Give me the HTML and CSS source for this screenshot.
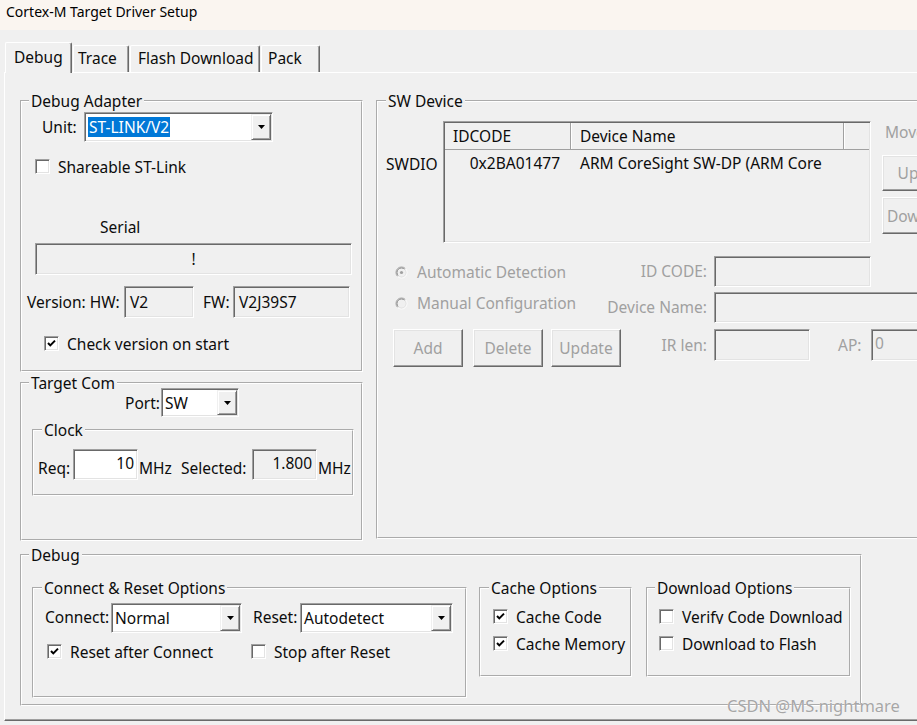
FILE: index.html
```html
<!DOCTYPE html>
<html>
<head>
<meta charset="utf-8">
<title>Cortex-M Target Driver Setup</title>
<link rel="stylesheet" href="styles.css">
</head>
<body>
<div class="title">Cortex-M Target Driver Setup</div>
<div class="tabs">
  <div class="tab tab-debug active">Debug</div>
  <div class="tab tab-trace">Trace</div>
  <div class="tab tab-flash">Flash Download</div>
  <div class="tab tab-pack">Pack</div>
</div>
<div class="panel">
  <div class="top">
    <div class="leftcol">
      <fieldset class="g adapter">
        <legend>Debug Adapter</legend>
        <div class="unit-row">
          <span class="unit-lbl">Unit:</span>
          <div class="select unit-sel">
            <span class="val"><span class="hl">ST-LINK/V2</span></span>
            <span class="dd"><svg width="7" height="4" viewBox="0 0 7 4"><path d="M0 0H7L3.5 4Z" fill="#000"/></svg></span>
          </div>
        </div>
        <div class="chk share"><span class="cb"></span><span>Shareable ST-Link</span></div>
        <div class="serial-lbl">Serial</div>
        <div class="box dis serial">!</div>
        <div class="ver-row">
          <span class="ver-lbl">Version: HW:</span>
          <div class="box dis hw">V2</div>
          <span class="fw-lbl">FW:</span>
          <div class="box dis fw">V2J39S7</div>
        </div>
        <div class="chk checkver"><span class="cb"><svg width="11" height="11" viewBox="0 0 11 11"><path d="M2 5L4.3 7.4L9 2.6" fill="none" stroke="#000" stroke-width="2"/></svg></span><span>Check version on start</span></div>
      </fieldset>
      <fieldset class="g tcom">
        <legend>Target Com</legend>
        <div class="port-row">
          <span class="port-lbl">Port:</span>
          <div class="select port-sel">
            <span class="val">SW</span>
            <span class="dd"><svg width="7" height="4" viewBox="0 0 7 4"><path d="M0 0H7L3.5 4Z" fill="#000"/></svg></span>
          </div>
        </div>
        <fieldset class="g clock">
          <legend>Clock</legend>
          <div class="clk-row">
            <span class="req-lbl">Req:</span>
            <div class="box req">10</div>
            <span class="mhz">MHz</span>
            <span class="sel-lbl">Selected:</span>
            <div class="box dis selbox">1.800</div>
            <span class="mhz2">MHz</span>
          </div>
        </fieldset>
      </fieldset>
    </div>
    <fieldset class="g swdev">
      <legend>SW Device</legend>
      <div class="sw-row">
        <span class="swdio">SWDIO</span>
        <div class="list">
          <div class="lh"><span class="c1">IDCODE</span><span class="c2">Device Name</span><span class="c3"></span></div>
          <div class="lr"><span class="c1">0x2BA01477</span><span class="c2">ARM CoreSight SW-DP (ARM Core</span></div>
        </div>
        <div class="sw-side">
          <div class="mov">Move</div>
          <div class="btn side-btn up">Up</div>
          <div class="btn side-btn down">Down</div>
        </div>
      </div>
      <div class="sw-form">
        <div class="radio r-auto"><svg width="13" height="13" viewBox="0 0 13 13"><circle cx="6.5" cy="6.5" r="5" fill="#f0f0f0"/><path d="M2.6 10.4A5.5 5.5 0 0 1 10.4 2.6" fill="none" stroke="#a0a0a0"/><path d="M10.4 2.6A5.5 5.5 0 0 1 2.6 10.4" fill="none" stroke="#fff"/><path d="M3.3 9.7A4.5 4.5 0 0 1 9.7 3.3" fill="none" stroke="#8a8a8a"/><path d="M9.7 3.3A4.5 4.5 0 0 1 3.3 9.7" fill="none" stroke="#e3e3e3"/><circle cx="6.5" cy="6.5" r="1.6" fill="#a0a0a0"/></svg><span>Automatic Detection</span></div>
        <div class="flbl">ID CODE:</div>
        <div class="box dis idcode"></div>
        <div class="radio r-man"><svg width="13" height="13" viewBox="0 0 13 13"><circle cx="6.5" cy="6.5" r="5" fill="#f0f0f0"/><path d="M2.6 10.4A5.5 5.5 0 0 1 10.4 2.6" fill="none" stroke="#a0a0a0"/><path d="M10.4 2.6A5.5 5.5 0 0 1 2.6 10.4" fill="none" stroke="#fff"/><path d="M3.3 9.7A4.5 4.5 0 0 1 9.7 3.3" fill="none" stroke="#8a8a8a"/><path d="M9.7 3.3A4.5 4.5 0 0 1 3.3 9.7" fill="none" stroke="#e3e3e3"/></svg><span>Manual Configuration</span></div>
        <div class="flbl">Device Name:</div>
        <div class="box dis devname"></div>
        <div class="btns">
          <div class="btn fbtn">Add</div>
          <div class="btn fbtn del">Delete</div>
          <div class="btn fbtn upd">Update</div>
        </div>
        <div class="flbl irl">IR len:</div>
        <div class="ir-row">
          <div class="box dis irlen"></div>
          <span class="ap-lbl">AP:</span>
          <div class="box dis ap">0</div>
        </div>
      </div>
    </fieldset>
  </div>
  <fieldset class="g dbg">
    <legend>Debug</legend>
    <div class="dbg-inner">
      <fieldset class="g conn">
        <legend>Connect &amp; Reset Options</legend>
        <div class="conn-row">
          <span class="conn-lbl">Connect:</span>
          <div class="select conn-sel">
            <span class="val">Normal</span>
            <span class="dd"><svg width="7" height="4" viewBox="0 0 7 4"><path d="M0 0H7L3.5 4Z" fill="#000"/></svg></span>
          </div>
          <span class="reset-lbl">Reset:</span>
          <div class="select reset-sel">
            <span class="val">Autodetect</span>
            <span class="dd"><svg width="7" height="4" viewBox="0 0 7 4"><path d="M0 0H7L3.5 4Z" fill="#000"/></svg></span>
          </div>
        </div>
        <div class="conn-checks">
          <div class="chk rac"><span class="cb"><svg width="11" height="11" viewBox="0 0 11 11"><path d="M2 5L4.3 7.4L9 2.6" fill="none" stroke="#000" stroke-width="2"/></svg></span><span>Reset after Connect</span></div>
          <div class="chk"><span class="cb"></span><span>Stop after Reset</span></div>
        </div>
      </fieldset>
      <fieldset class="g cache">
        <legend>Cache Options</legend>
        <div class="chk opt"><span class="cb"><svg width="11" height="11" viewBox="0 0 11 11"><path d="M2 5L4.3 7.4L9 2.6" fill="none" stroke="#000" stroke-width="2"/></svg></span><span>Cache Code</span></div>
        <div class="chk opt"><span class="cb"><svg width="11" height="11" viewBox="0 0 11 11"><path d="M2 5L4.3 7.4L9 2.6" fill="none" stroke="#000" stroke-width="2"/></svg></span><span>Cache Memory</span></div>
      </fieldset>
      <fieldset class="g dl">
        <legend>Download Options</legend>
        <div class="chk opt clip"><span class="cb"></span><span>Verify Code Download</span></div>
        <div class="chk opt"><span class="cb"></span><span>Download to Flash</span></div>
      </fieldset>
    </div>
  </fieldset>
</div>
<div class="wm">CSDN @MS.nightmare</div>
</body>
</html>
```

FILE: styles.css
```css
* { box-sizing: border-box; }
html, body { margin: 0; padding: 0; }
body {
  width: 917px;
  height: 725px;
  overflow: hidden;
  position: relative;
  background: #f0f0f0;
  font-family: "Noto Sans", "Open Sans", sans-serif;
  font-size: 15.5px;
  color: #0c0c0c;
}

/* group boxes (base) */
.g {
  margin: 0;
  padding: 0;
  min-width: 0;
  border: 2px groove #fff;
  flex: none;
}
.g > legend {
  padding: 0 2px;
  line-height: 18px;
  height: 18px;
  margin-left: 7px;
  white-space: nowrap;
}

/* title bar */
.title {
  height: 30px;
  background: #faf5f0;
  padding-left: 6px;
  font-size: 14px;
  line-height: 24px;
  color: #000;
}

/* tabs */
.tabs {
  display: flex;
  align-items: flex-end;
  height: 42px;
  padding-left: 5px;
}
.tab {
  height: 27px;
  margin-right: 1px;
  background: #f0f0f0;
  border-top: 1px solid #fff;
  border-left: 1px solid #fff;
  border-right: 1px solid #696969;
  box-shadow: inset -1px 0 0 #a0a0a0;
  border-radius: 2px 2px 0 0;
  line-height: 24px;
  white-space: nowrap;
}
.tab.active {
  height: 31px;
  margin-bottom: -1px;
  line-height: 28px;
  position: relative;
  z-index: 1;
}
.tab-debug { width: 67px; padding-left: 8px; }
.tab-trace { width: 56px; padding-left: 4px; }
.tab-flash { width: 130px; padding-left: 7px; }
.tab-pack { width: 59px; padding-left: 6px; }

/* panel */
.panel {
  margin-left: 4px;
  width: 960px;
  height: 649px;
  border-top: 1px solid #fff;
  border-left: 1px solid #fff;
  border-bottom: 1px solid #696969;
  box-shadow: inset 0 -1px 0 #a0a0a0;
  padding: 19px 0 0 15px;
}
.top {
  display: flex;
  align-items: flex-start;
  gap: 13px;
}
.leftcol {
  width: 343px;
  flex: none;
  display: flex;
  flex-direction: column;
}

/* common controls */
.select {
  display: flex;
  height: 30px;
  padding: 1px;
  background: #fff;
  border: 1px solid;
  border-color: #a0a0a0 #fff #fff #a0a0a0;
  box-shadow: inset 1px 1px 0 #696969, inset -1px -1px 0 #e3e3e3;
  flex: none;
}
.select .val {
  flex: 1;
  display: flex;
  align-items: center;
  padding-left: 2px;
  white-space: nowrap;
  overflow: hidden;
}
.dd {
  width: 20px;
  flex: none;
  display: flex;
  align-items: center;
  justify-content: center;
  background: #f0f0f0;
  border: 1px solid;
  border-color: #f0f0f0 #696969 #696969 #f0f0f0;
  box-shadow: inset 1px 1px 0 #fff, inset -1px -1px 0 #a0a0a0;
}
.dd svg { display: block; }
.hl {
  background: #0078d7;
  color: #fff;
  padding: 0 1px;
  line-height: 20px;
}
.box {
  display: flex;
  align-items: center;
  flex: none;
  padding: 0 4px 0 5px;
  background: #fff;
  border: 1px solid;
  border-color: #a0a0a0 #fff #fff #a0a0a0;
  box-shadow: inset 1px 1px 0 #696969, inset -1px -1px 0 #e3e3e3;
  white-space: nowrap;
  overflow: hidden;
}
.box.dis { background: #f0f0f0; }

.chk {
  display: flex;
  align-items: center;
  gap: 8px;
  height: 15px;
  line-height: 20px;
  white-space: nowrap;
}
.cb {
  width: 15px;
  height: 15px;
  flex: none;
  padding: 1px;
  background: #fff;
  border: 1px solid;
  border-color: #a0a0a0 #fff #fff #a0a0a0;
  box-shadow: inset 1px 1px 0 #696969, inset -1px -1px 0 #e3e3e3;
}
.cb svg { display: block; }

.btn {
  display: flex;
  align-items: center;
  justify-content: center;
  background: #f0f0f0;
  color: #a0a0a0;
  border: 1px solid;
  border-color: #fff #696969 #696969 #fff;
  box-shadow: inset -1px -1px 0 #a0a0a0, inset 1px 1px 0 #e3e3e3;
  white-space: nowrap;
}

/* debug adapter */
.adapter { height: 280px; }
.unit-row {
  display: flex;
  align-items: center;
  margin-top: 2px;
  padding-left: 20px;
}
.unit-lbl { width: 42px; }
.unit-sel { width: 189px; }
.share { margin-top: 17px; padding-left: 13px; }
.serial-lbl {
  margin-top: 43px;
  padding-left: 78px;
  line-height: 20px;
}
.serial {
  margin-top: 6px;
  margin-left: 13px;
  width: 317px;
  height: 32px;
  justify-content: center;
  padding: 0;
}
.ver-row {
  display: flex;
  align-items: center;
  margin-top: 11px;
  padding-left: 5px;
}
.ver-lbl { width: 97px; white-space: nowrap; }
.hw { width: 70px; height: 32px; }
.fw-lbl { width: 30px; margin-left: 9px; }
.fw { width: 117px; height: 32px; }
.checkver { margin-top: 18px; padding-left: 22px; }

/* target com */
.tcom { margin-top: 2px; height: 167px; }
.port-row {
  display: flex;
  align-items: center;
  margin-top: -4px;
  padding-left: 103px;
}
.port-lbl { width: 36px; }
.port-sel { width: 78px; height: 29px; }
.clock {
  margin-top: 4px;
  margin-left: 10px;
  width: 322px;
  height: 75px;
}
.clock > legend { margin-left: 8px; }
.clk-row {
  display: flex;
  align-items: flex-start;
  margin-top: 10px;
  padding-left: 4px;
  white-space: nowrap;
}
.clk-row > span { line-height: 20px; margin-top: 9px; }
.req-lbl { width: 35px; }
.req, .selbox {
  width: 65px;
  height: 31px;
  justify-content: flex-end;
  align-items: flex-start;
  line-height: 27px;
}
.req { padding-right: 3px; }
.selbox { padding-right: 4px; }
.mhz { width: 42px; margin-left: 1px; }
.sel-lbl { width: 71px; }
.mhz2 { margin-left: 1px; }

/* SW device */
.swdev { width: 600px; height: 447px; }
.swdev > legend { margin-left: 8px; }
.sw-row {
  display: flex;
  align-items: flex-start;
  margin-top: 11px;
  padding-left: 8px;
}
.swdio {
  width: 57px;
  flex: none;
  margin-top: 33px;
  line-height: 20px;
}
.list {
  width: 428px;
  height: 122px;
  flex: none;
  padding: 1px;
  background: #f0f0f0;
  border: 1px solid;
  border-color: #a0a0a0 #fff #fff #a0a0a0;
  box-shadow: inset 1px 1px 0 #696969, inset -1px -1px 0 #e3e3e3;
  overflow: hidden;
}
.lh {
  display: flex;
  height: 27px;
  line-height: 26px;
  border-bottom: 1px solid #a0a0a0;
}
.lh .c1, .lh .c2 {
  border-right: 1px solid #a0a0a0;
  box-shadow: 1px 0 0 #fff;
}
.c1 { width: 126px; flex: none; padding-left: 8px; white-space: nowrap; }
.c2 { width: 273px; flex: none; padding-left: 9px; white-space: nowrap; }
.c3 { flex: 1; }
.lr {
  display: flex;
  line-height: 26px;
}
.lr .c1 { text-align: right; padding-left: 0; padding-right: 11px; }
.sw-side {
  margin-left: 11px;
  width: 60px;
  flex: none;
}
.mov {
  color: #a0a0a0;
  line-height: 20px;
  margin-top: 1px;
  padding-left: 3px;
  white-space: nowrap;
}
.side-btn { width: 52px; }
.up { margin-top: 13px; height: 36px; }
.down { margin-top: 6px; height: 37px; }

.sw-form {
  display: grid;
  grid-template-columns: 198px 109px auto;
  grid-template-rows: 36px 37px 38px;
  column-gap: 7px;
  align-items: start;
  margin-top: 13px;
  margin-left: 15px;
}
.radio {
  display: flex;
  align-items: center;
  height: 20px;
  padding-left: 2px;
  color: #a0a0a0;
  white-space: nowrap;
}
.radio svg { display: block; margin-right: 9px; flex: none; }
.r-auto { margin-top: 6px; }
.r-man { margin-top: 1px; }
.flbl {
  color: #a0a0a0;
  text-align: right;
  line-height: 31px;
  white-space: nowrap;
}
.irl { line-height: 32px; }
.idcode { width: 157px; height: 31px; }
.devname { width: 260px; height: 31px; }
.btns { display: flex; }
.fbtn { width: 70px; height: 38px; flex: none; }
.del { margin-left: 10px; }
.upd { margin-left: 8px; }
.ir-row { display: flex; align-items: center; }
.irlen { width: 96px; height: 32px; }
.ap-lbl { width: 33px; margin-left: 28px; color: #a0a0a0; flex: none; }
.ap { width: 60px; height: 32px; color: #a0a0a0; padding-left: 3px; align-items: flex-start; line-height: 26px; }

/* debug bottom */
.dbg {
  margin-top: 5px;
  width: 842px;
  height: 160px;
}
.dbg-inner {
  display: flex;
  align-items: flex-start;
  margin-top: 15px;
  padding-left: 10px;
}
.conn { width: 435px; height: 119px; }
.conn > legend { margin-left: 8px; }
.conn-row {
  display: flex;
  align-items: center;
  margin-top: 6px;
  padding-left: 11px;
  white-space: nowrap;
}
.conn-lbl { width: 66px; margin-top: -3px; flex: none; }
.conn-sel { width: 131px; }
.reset-lbl { width: 47px; margin-left: 11px; margin-top: -3px; flex: none; }
.reset-sel { width: 153px; }
.conn-checks {
  display: flex;
  margin-top: 11px;
  padding-left: 13px;
}
.rac { width: 204px; flex: none; }
.cache { width: 153px; height: 98px; margin-left: 12px; }
.cache > legend { margin-left: 8px; }
.dl { width: 205px; height: 98px; margin-left: 14px; }
.cache .opt { padding-left: 12px; margin-top: 12px; }
.dl .opt { padding-left: 11px; margin-top: 12px; }
.clip { width: 194px; overflow: hidden; }

/* watermark overlay */
.wm {
  position: absolute;
  left: 727px;
  top: 694px;
  font-size: 16.5px;
  line-height: 24px;
  color: #a6a6a6;
  text-shadow: 0 0 1px #fff;
  white-space: nowrap;
}
```
